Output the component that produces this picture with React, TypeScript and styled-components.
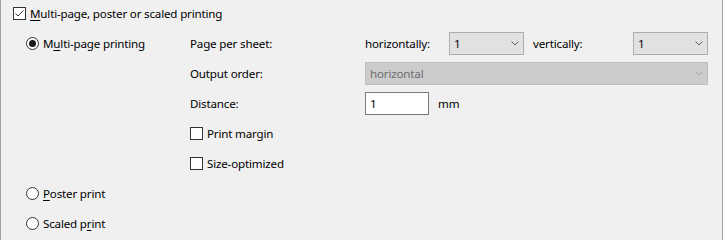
import React from 'react';
import styled, {createGlobalStyle} from "styled-components";

const GlobalStyle = createGlobalStyle`
  html, body {
    margin: 0;
    padding: 0;
    background: #f0f0f0;
  }
  body {
    font-family: "Noto Sans", "Liberation Sans", sans-serif;
    font-size: 11.6px;
    letter-spacing: -0.18px;
    color: #000;
  }
`

type ChoiceProps = {
    checked?: boolean
    label: React.ReactNode
}

const Chevron = ({disabled}: { disabled?: boolean }) => (
    <svg width="8" height="5" viewBox="0 0 8 5">
        <path d="M0.5 0.5 L4 4 L7.5 0.5" fill="none" stroke={disabled ? '#a8a8a8' : '#5a5a5a'} strokeWidth="1"/>
    </svg>
)

const CheckOption = ({checked, label}: ChoiceProps) => (
    <Option>
        <CheckBox>
            {checked && (
                <svg width="11" height="11" viewBox="0 0 11 11">
                    <path d="M1.5 5.5 L4 8 L9.5 2.5" fill="none" stroke="#333" strokeWidth="1"/>
                </svg>
            )}
        </CheckBox>
        <span>{label}</span>
    </Option>
)

const RadioOption = ({checked, label}: ChoiceProps) => (
    <Option>
        <Radio>{checked && <RadioDot/>}</Radio>
        <span>{label}</span>
    </Option>
)

const Select = ({value, width}: { value: string, width: number }) => (
    <SelectBox style={{width}}>
        <span>{value}</span>
        <Chevron/>
    </SelectBox>
)

export default function App() {
    return (
        <>
            <GlobalStyle/>
            <Frame>
                <Header>
                    <CheckOption checked label={<><u>M</u>ulti-page, poster or scaled printing</>}/>
                </Header>
                <Body>
                    <RadioCell>
                        <RadioOption checked label={<>M<u>u</u>lti-page printing</>}/>
                    </RadioCell>
                    <Label>Page per sheet:</Label>
                    <Controls>
                        <InlineLabel width={84}>horizontally:</InlineLabel>
                        <Select value="1" width={75}/>
                        <InlineLabel width={100} style={{marginLeft: 9}}>vertically:</InlineLabel>
                        <Select value="1" width={75}/>
                    </Controls>

                    <RadioCell/>
                    <Label>Output order:</Label>
                    <Controls>
                        <DisabledSelect>
                            <span>horizontal</span>
                            <Chevron disabled/>
                        </DisabledSelect>
                    </Controls>

                    <RadioCell/>
                    <Label>Distance:</Label>
                    <Controls>
                        <Input>1</Input>
                        <Unit>mm</Unit>
                    </Controls>

                    <RadioCell/>
                    <Label>
                        <CheckOption label="Print margin"/>
                    </Label>
                    <Controls/>

                    <RadioCell/>
                    <Label>
                        <CheckOption label="Size-optimized"/>
                    </Label>
                    <Controls/>

                    <RadioCell>
                        <RadioOption label={<><u>P</u>oster print</>}/>
                    </RadioCell>
                    <Label/>
                    <Controls/>

                    <RadioCell>
                        <RadioOption label={<>Scaled p<u>r</u>int</>}/>
                    </RadioCell>
                    <Label/>
                    <Controls/>
                </Body>
            </Frame>
        </>
    );
}

//=========================LAYOUT==================================

const Frame = styled.div`
  width: 723px;
  height: 240px;
  box-sizing: border-box;
  border-left: 1px solid #a0a0a0;
  border-right: 1px solid #a0a0a0;
  background: #f0f0f0;
  overflow: hidden;
`

const Header = styled.div`
  height: 23px;
  margin-top: 2px;
  padding-left: 12px;
  display: flex;
  align-items: center;
`

const Body = styled.div`
  margin-top: 7px;
  padding-left: 25px;
  display: grid;
  grid-template-columns: 164px 175px 1fr;
  grid-auto-rows: 23px;
  row-gap: 7px;
`

const RadioCell = styled.div`
  display: flex;
  align-items: center;
`

const Label = styled.div`
  display: flex;
  align-items: center;
`

const Controls = styled.div`
  display: flex;
  align-items: center;
`

const InlineLabel = styled.div<{ width: number }>`
  width: ${props => props.width}px;
`

//=========================CONTROLS================================

const Option = styled.div`
  display: flex;
  align-items: center;
  gap: 4px;
  white-space: nowrap;

  u {
    text-decoration-thickness: 1px;
    text-underline-offset: 2px;
  }
`

const CheckBox = styled.div`
  width: 13px;
  height: 13px;
  box-sizing: border-box;
  border: 1px solid #333;
  background: #fff;
  display: flex;
  align-items: center;
  justify-content: center;
  flex-shrink: 0;
`

const Radio = styled.div`
  width: 13px;
  height: 13px;
  box-sizing: border-box;
  border: 1px solid #333;
  border-radius: 50%;
  background: #fff;
  display: flex;
  align-items: center;
  justify-content: center;
  flex-shrink: 0;
`

const RadioDot = styled.div`
  width: 7px;
  height: 7px;
  border-radius: 50%;
  background: #1a1a1a;
`

const SelectBox = styled.div`
  height: 23px;
  box-sizing: border-box;
  border: 1px solid #adadad;
  background: #e1e1e1;
  display: flex;
  align-items: center;
  justify-content: space-between;
  padding: 0 4px 0 4px;
`

const DisabledSelect = styled(SelectBox)`
  width: 343px;
  border-color: #bfbfbf;
  background: #cccccc;
  color: #6d6d6d;
`

const Input = styled.div`
  width: 64px;
  height: 23px;
  box-sizing: border-box;
  border: 1px solid #7a7a7a;
  background: #fff;
  display: flex;
  align-items: center;
  padding-left: 4px;
`

const Unit = styled.span`
  margin-left: 9px;
`
